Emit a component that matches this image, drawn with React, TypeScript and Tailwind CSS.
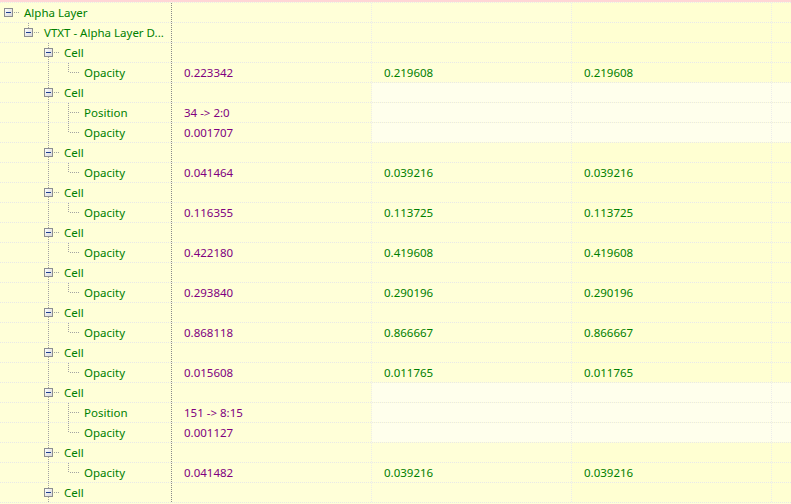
import React from "react";

type Row = {
  level: number;
  label: string;
  box?: boolean;
  more?: boolean; // node has a sibling further down
  vals?: string[];
  light?: boolean;
};

const cellRow = (light = false): Row => ({ level: 2, label: "Cell", box: true, more: true, light });
const opacity = (vals: string[], light = false, more = false): Row => ({ level: 3, label: "Opacity", vals, light, more });

const rows: Row[] = [
  { level: 0, label: "Alpha Layer", box: true },
  { level: 1, label: "VTXT - Alpha Layer D...", box: true },
  cellRow(),
  opacity(["0.223342", "0.219608", "0.219608"]),
  cellRow(true),
  { level: 3, label: "Position", vals: ["34 -> 2:0"], light: true, more: true },
  opacity(["0.001707"], true),
  cellRow(),
  opacity(["0.041464", "0.039216", "0.039216"]),
  cellRow(),
  opacity(["0.116355", "0.113725", "0.113725"]),
  cellRow(),
  opacity(["0.422180", "0.419608", "0.419608"]),
  cellRow(),
  opacity(["0.293840", "0.290196", "0.290196"]),
  cellRow(),
  opacity(["0.868118", "0.866667", "0.866667"]),
  cellRow(),
  opacity(["0.015608", "0.011765", "0.011765"]),
  cellRow(true),
  { level: 3, label: "Position", vals: ["151 -> 8:15"], light: true, more: true },
  opacity(["0.001127"], true),
  cellRow(),
  opacity(["0.041482", "0.039216", "0.039216"]),
  cellRow(),
];

const DOT = "#a3a3a3";

// connector lines + expand box for one tree row
function TreeGlyph({ row }: { row: Row }) {
  const L = row.level;
  const w = 20 * (L + 1);
  const cx = 20 * L + 8.5;
  const lines: React.ReactNode[] = [];
  // the Cell column keeps running past the leaf rows
  if (L === 3) {
    lines.push(<line key="anc" x1={48.5} y1={0} x2={48.5} y2={20} />);
  }
  if (L > 0) {
    const y2 = L === 2 || row.more ? 20 : 9.5;
    lines.push(<line key="v" x1={cx} y1={0} x2={cx} y2={y2} />);
  }
  lines.push(<line key="h" x1={cx + 1} y1={9.5} x2={20 * L + 21} y2={9.5} />);

  return (
    <svg width={w} height={20} className="shrink-0 -mb-px" shapeRendering="crispEdges">
      <g stroke={DOT} strokeWidth={1} strokeDasharray="1 1">
        {lines}
      </g>
      {row.box && (
        <g>
          <defs>
            <linearGradient id={`bx${L}`} x1="0" y1="0" x2="1" y2="1">
              <stop offset="0" stopColor="#ffffff" />
              <stop offset="1" stopColor="#d6d6d6" />
            </linearGradient>
          </defs>
          <rect x={20 * L + 4.5} y={5.5} width={8} height={8} fill={`url(#bx${L})`} stroke="#8c8e91" />
          <line x1={20 * L + 6} y1={9.5} x2={20 * L + 11} y2={9.5} stroke="#1f3f8f" />
        </g>
      )}
    </svg>
  );
}

export default function App() {
  return (
    <div
      className="w-[791px] h-[504px] overflow-hidden bg-[#ffffd8] text-[11.5px]"
      style={{ fontFamily: '"Noto Sans", "Open Sans", sans-serif' }}
    >
      <div className="h-[2px] bg-[#ffd6d6]" />
      <div className="h-px border-b border-dotted border-[#eaeaea]" />
      {rows.map((row, i) => {
        const side = row.light ? "bg-[#ffffec]" : "bg-[#ffffd2]";
        return (
          <div
            key={i}
            className="grid grid-cols-[172px_200px_200px_200px_1fr] h-5 border-b border-dotted border-[#e8e8e8]"
          >
            <div className="flex items-start border-r border-dotted border-r-[#8a8a8a] bg-[#ffffd8] overflow-hidden">
              <TreeGlyph row={row} />
              <span className="ml-1 leading-[19px] text-[#008000] whitespace-nowrap">{row.label}</span>
            </div>
            <div className="pl-3 leading-[19px] text-[#800080] border-r border-dotted border-r-[#ececec] bg-[#ffffd8]">
              {row.vals?.[0]}
            </div>
            <div className={`pl-3 leading-[19px] text-[#008000] border-r border-dotted border-r-[#ececec] ${row.light ? "bg-[#ffffec]" : "bg-[#ffffd8]"}`}>
              {row.vals?.[1]}
            </div>
            <div className={`pl-3 leading-[19px] text-[#008000] border-r border-dotted border-r-[#ececec] ${side}`}>
              {row.vals?.[2]}
            </div>
            <div className={side} />
          </div>
        );
      })}
    </div>
  );
}
